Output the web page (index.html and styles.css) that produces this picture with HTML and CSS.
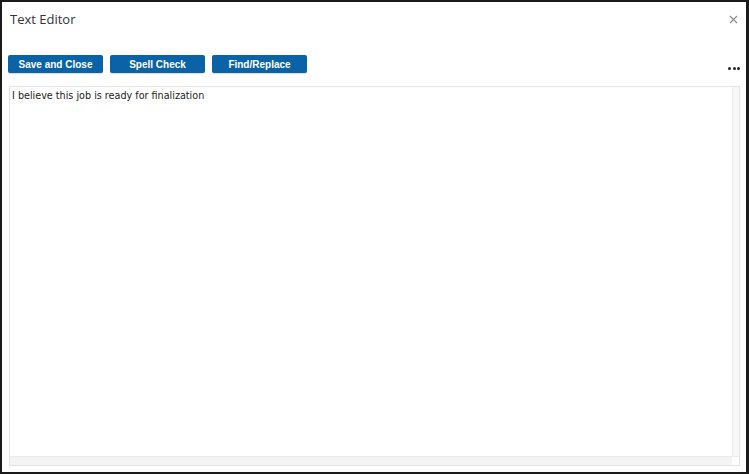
FILE: index.html
```html
<!DOCTYPE html>
<html>
<head>
<meta charset="utf-8">
<link rel="stylesheet" href="styles.css">
</head>
<body>
<div class="dialog">
  <div class="header">
    <span class="title">Text Editor</span>
    <svg class="close" width="9" height="9" viewBox="0 0 9 9"><path d="M1 1L8 8M8 1L1 8" stroke="#8a8a8a" stroke-width="1.1" fill="none"/></svg>
  </div>
  <div class="toolbar">
    <button class="btn">Save and Close</button>
    <button class="btn">Spell Check</button>
    <button class="btn">Find/Replace</button>
    <span class="more"><i></i><i></i><i></i></span>
  </div>
  <div class="editor">
    <div class="content">
      <div class="text">I believe this job is ready for finalization</div>
      <div class="vscroll"></div>
    </div>
    <div class="hscroll"><div class="corner"></div></div>
  </div>
</div>
</body>
</html>
```
FILE: styles.css
```css
html, body { margin: 0; padding: 0; }
body { width: 749px; height: 474px; background: #fff; font-family: "Liberation Sans", Arial, sans-serif; }
.dialog {
  box-sizing: border-box;
  width: 749px; height: 474px;
  border: 2px solid #1a1a1a;
  border-right-width: 3px;
  display: flex; flex-direction: column;
  padding: 0 5px 6px 6px;
}
.header {
  height: 34px;
  display: flex; align-items: center; justify-content: space-between;
  padding: 0 3px 0 2px;
}
.title { font-size: 13px; color: #333; font-family: "Open Sans", "Liberation Sans", sans-serif; }
.close { display: block; }
.toolbar {
  height: 50px;
  display: flex; align-items: flex-start; gap: 7px;
  padding-top: 19px; box-sizing: border-box;
}
.btn {
  width: 95px; height: 18px;
  background: #0b63a7; color: #fff;
  border: none; border-radius: 2px;
  font-family: "Liberation Sans", Arial, sans-serif;
  font-weight: bold; font-size: 10px;
  padding: 0;
  box-shadow: 0 1px 1px rgba(0,0,0,0.15);
}
.more { margin-left: auto; margin-top: 12px; margin-right: 1px; display: flex; gap: 1.5px; }
.more i { width: 3px; height: 3px; border-radius: 50%; background: #222; display: block; }
.editor {
  flex: 1;
  border: 1px solid #e4e4e4;
  display: flex; flex-direction: column;
  margin-left: 1px; margin-right: 1px;
}
.content { flex: 1; display: flex; }
.text { flex: 1; font-family: "DejaVu Sans Condensed", "DejaVu Sans", sans-serif; font-size: 10.7px; color: #222; padding: 2px 2px; }
.vscroll { width: 6px; border-left: 1px solid #ececec; background: #f7f7f7; }
.hscroll { height: 8px; border-top: 1px solid #ececec; background: #f4f4f4; display: flex; justify-content: flex-end; }
.corner { width: 7px; background: #fff; }
```
